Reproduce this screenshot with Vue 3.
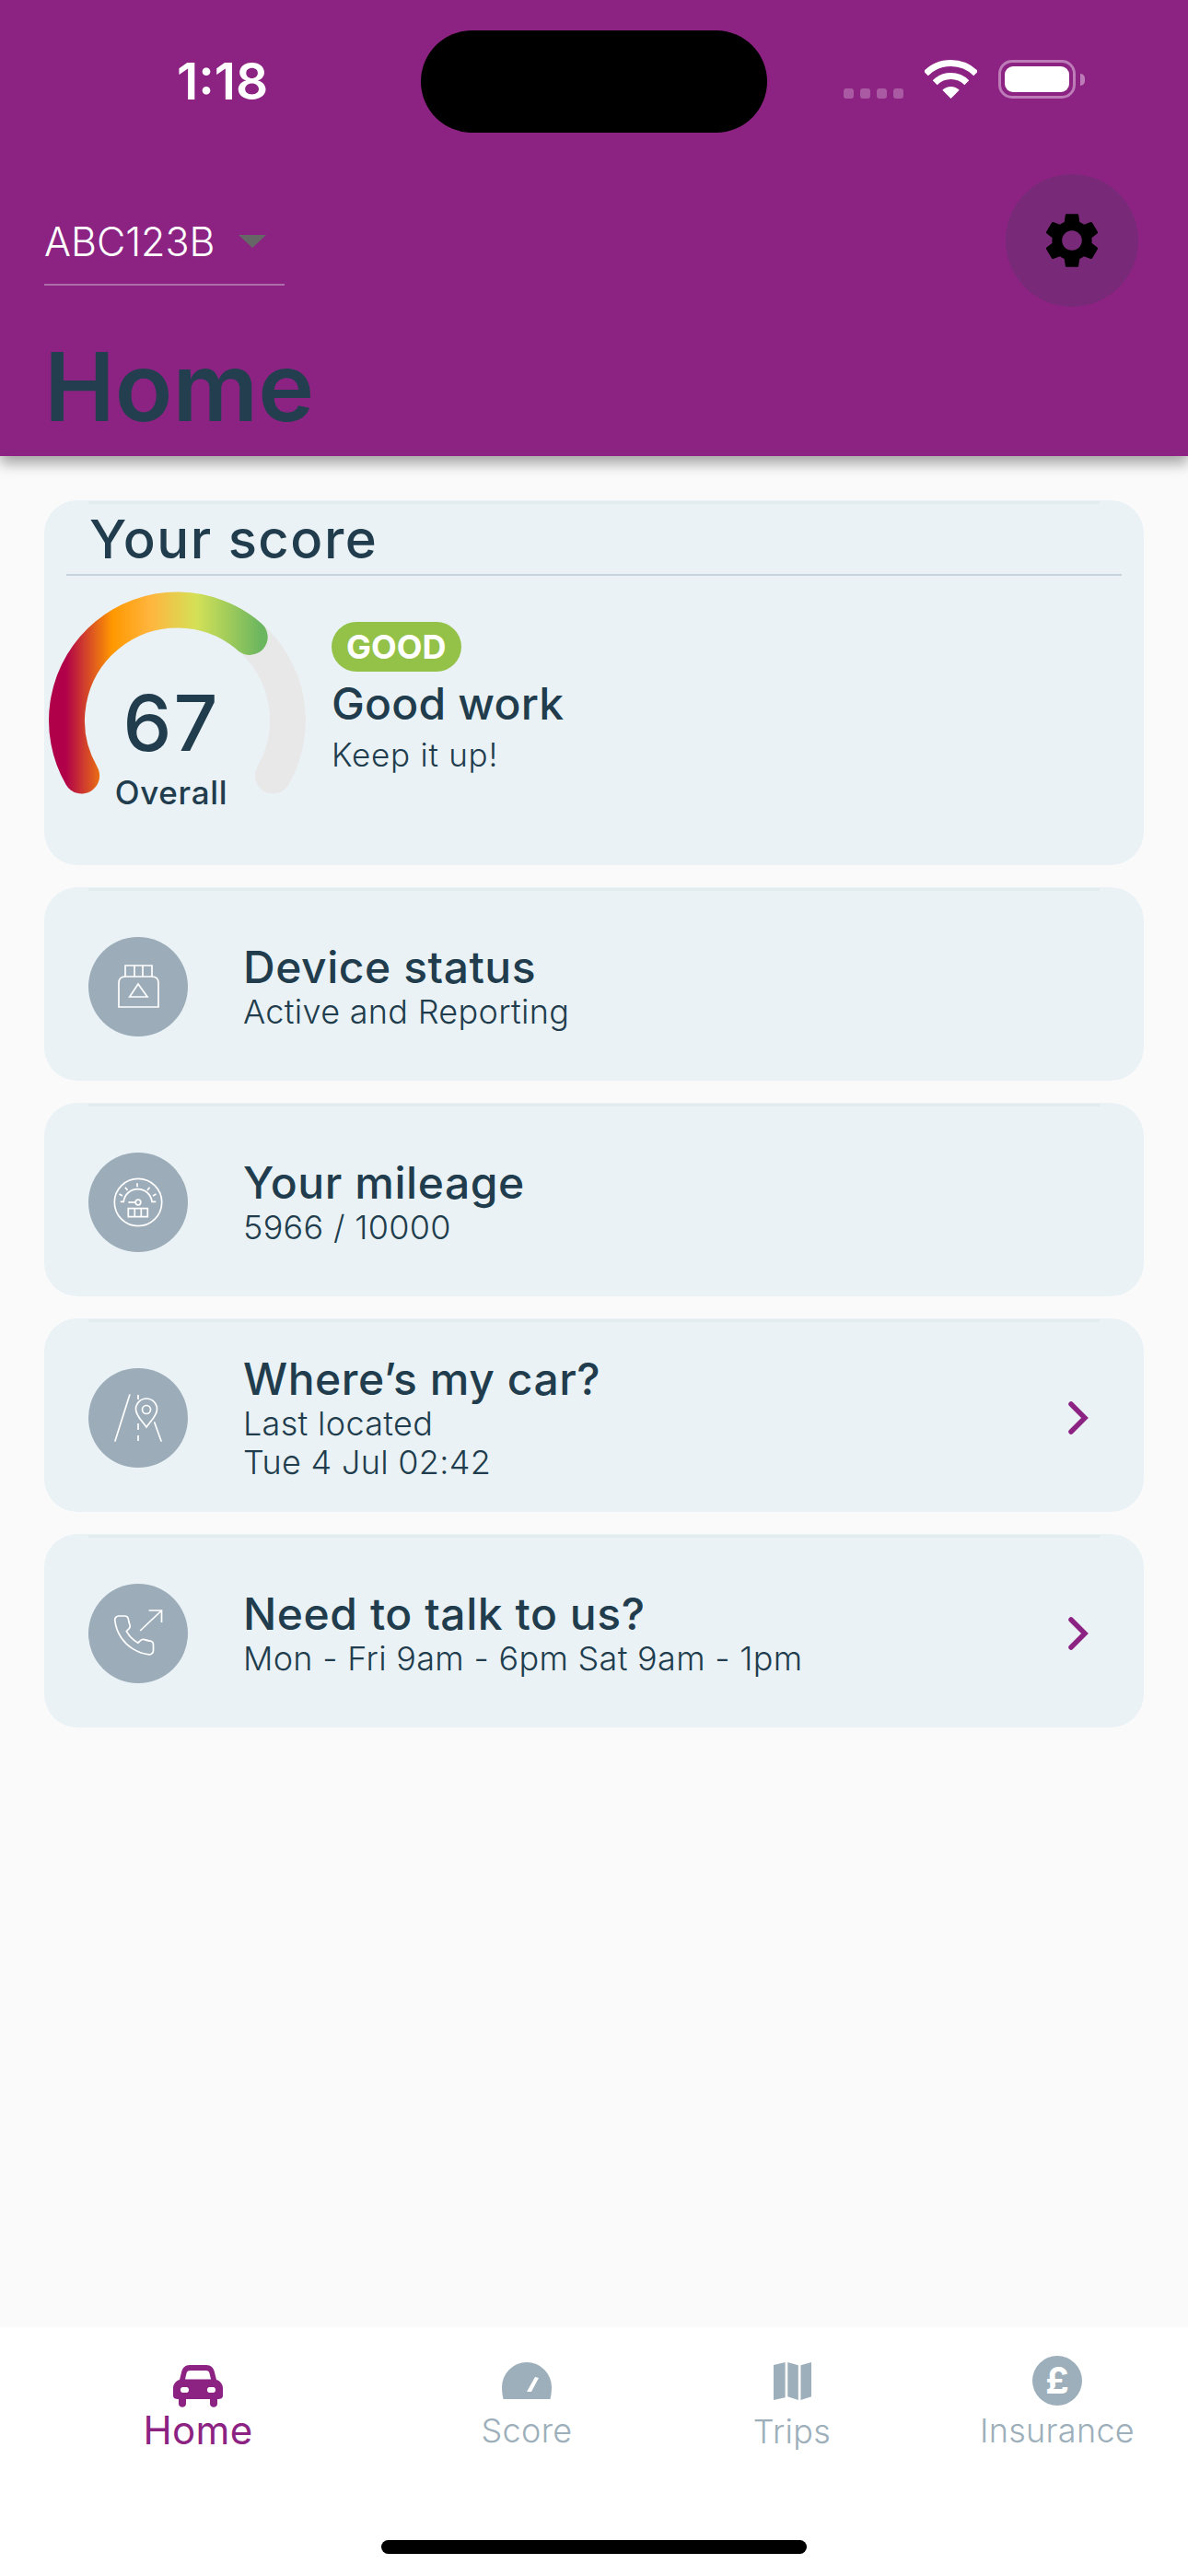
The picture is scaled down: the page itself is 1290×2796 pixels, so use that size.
<script setup>
const rows = [
  { key: 'device', title: 'Device status', lines: ['Active and Reporting'], link: false },
  { key: 'mileage', title: 'Your mileage', lines: ['5966 / 10000'], link: false },
  { key: 'car', title: 'Where’s my car?', lines: ['Last located', 'Tue 4 Jul 02:42'], link: true },
  { key: 'phone', title: 'Need to talk to us?', lines: ['Mon - Fri 9am - 6pm Sat 9am - 1pm'], link: true }
]
</script>

<template>
  <div class="page">
    <header class="top">
      <div class="status">
        <div class="time-slot"><span class="time">1:18</span></div>
        <div class="island"></div>
        <div class="status-right">
          <div class="signal"><i></i><i></i><i></i><i></i></div>
          <svg class="wifi" width="57" height="42" viewBox="0 0 57 42">
            <path d="M1.3 14.8A38.5 38.5 0 0 1 55.7 14.8" fill="none" stroke="#fff" stroke-width="7" />
            <path d="M11.2 24.7A24.5 24.5 0 0 1 45.8 24.7" fill="none" stroke="#fff" stroke-width="7" />
            <path d="M28.5 42L19.3 32.8A13 13 0 0 1 37.7 32.8Z" fill="#fff" />
          </svg>
          <div class="battery"><div class="battery-fill"></div></div>
          <div class="battery-cap"></div>
        </div>
      </div>

      <div class="top-row">
        <div class="select">
          <span class="select-text">ABC123B</span>
          <span class="select-arrow"></span>
        </div>
        <button class="gear">
          <svg width="72" height="72" viewBox="0 0 24 24">
            <path d="M19.14 12.94c.04-.3.06-.61.06-.94 0-.32-.02-.64-.07-.94l2.03-1.58c.18-.14.23-.41.12-.61l-1.92-3.32c-.12-.22-.37-.29-.59-.22l-2.39.96c-.5-.38-1.03-.7-1.62-.94l-.36-2.54c-.04-.24-.24-.41-.48-.41h-3.84c-.24 0-.43.17-.47.41l-.36 2.54c-.59.24-1.13.57-1.62.94l-2.39-.96c-.22-.08-.47 0-.59.22L2.74 8.87c-.12.21-.08.47.12.61l2.03 1.58c-.05.3-.09.63-.09.94s.02.64.07.94l-2.03 1.58c-.18.14-.23.41-.12.61l1.92 3.32c.12.22.37.29.59.22l2.39-.96c.5.38 1.03.7 1.62.94l.36 2.54c.05.24.24.41.48.41h3.84c.24 0 .44-.17.47-.41l.36-2.54c.59-.24 1.13-.56 1.62-.94l2.39.96c.22.08.47 0 .59-.22l1.92-3.32c.12-.22.07-.47-.12-.61l-2.01-1.58zM12 15.6c-1.98 0-3.6-1.62-3.6-3.6s1.62-3.6 3.6-3.6 3.6 1.62 3.6 3.6-1.62 3.6-3.6 3.6z" fill="#000" />
          </svg>
        </button>
      </div>

      <h1 class="page-title">Home</h1>
    </header>

    <main class="content">
      <section class="card score-card">
        <h2 class="score-title">Your score</h2>
        <div class="score-line"></div>
        <div class="score-body">
          <svg class="gauge" width="300" height="240" viewBox="0 0 300 240">
            <defs>
              <linearGradient id="scoreGrad" gradientUnits="userSpaceOnUse" x1="23" y1="0" x2="235" y2="0">
                <stop offset="0" stop-color="#b0004a" />
                <stop offset="0.24" stop-color="#ff9800" />
                <stop offset="0.44" stop-color="#ffb63f" />
                <stop offset="0.67" stop-color="#d4e157" />
                <stop offset="1" stop-color="#6cb65f" />
              </linearGradient>
            </defs>
            <path d="M40.6 202A120 120 0 1 1 248.4 202" fill="none" stroke="#e8e8e8" stroke-width="39" stroke-linecap="round" />
            <path d="M40.6 202A120 120 0 0 1 223.2 51.4" fill="none" stroke="url(#scoreGrad)" stroke-width="39" stroke-linecap="round" />
            <text class="gauge-num" x="138" y="175" text-anchor="middle">67</text>
            <text class="gauge-label" x="138" y="233" text-anchor="middle">Overall</text>
          </svg>
          <div class="score-text">
            <span class="pill">GOOD</span>
            <div class="score-head">Good work</div>
            <div class="score-sub">Keep it up!</div>
          </div>
        </div>
      </section>

      <section v-for="row in rows" :key="row.key" class="card row">
        <div class="row-icon">
          <svg width="108" height="108" viewBox="0 0 108 108" fill="none" stroke="#fff" stroke-width="1.7">
            <g v-if="row.key === 'device'">
              <path d="M33 76V50q0-7 7-7h29q7 0 7 7v26Z" />
              <path d="M40 43V31h29v12M50 31v12M59 31v12" />
              <path d="M44.7 65L54 51l10 14Z" />
            </g>
            <g v-else-if="row.key === 'mileage'">
              <circle cx="54" cy="54" r="25.7" />
              <path d="M34.7 53.3h3.5A15.5 15.5 0 0 1 69 53.3h4.3" />
              <path d="M53 37.3v-4M42.5 41l-2.5-3.2M64 41l2.5-3.2M37 47l-3.5-2M70 47l3.5-2" />
              <circle cx="54" cy="54" r="2.8" />
              <path d="M43.3 54h8" />
              <path d="M43.3 60.7H64.3V69.7H43.3ZM50.3 60.7V69.7M57.3 60.7V69.7" />
            </g>
            <g v-else-if="row.key === 'car'">
              <path d="M44.8 29L29 79M71.8 59L79 79" stroke-linecap="round" />
              <path d="M54 29v5M54 60v7M54 73v6" />
              <path d="M63 64C59 58 51.5 52 51.5 44.5A11.5 11.5 0 0 1 74.5 44.5C74.5 52 67 58 63 64Z" />
              <circle cx="63" cy="45" r="4.5" />
            </g>
            <g v-else>
              <path transform="translate(24.3 30.8) scale(2.1)" stroke-width="0.8" d="M22 16.92v3a2 2 0 0 1-2.18 2 19.79 19.79 0 0 1-8.63-3.07 19.5 19.5 0 0 1-6-6 19.79 19.79 0 0 1-3.07-8.67A2 2 0 0 1 4.11 2h3a2 2 0 0 1 2 1.72 12.84 12.84 0 0 0 .7 2.81 2 2 0 0 1-.45 2.11L8.09 9.91a16 16 0 0 0 6 6l1.27-1.27a2 2 0 0 1 2.11-.45 12.84 12.84 0 0 0 2.81.7A2 2 0 0 1 22 16.92z" />
              <path d="M56.2 51L79.5 29M65.6 29H79.5V42" />
            </g>
          </svg>
        </div>
        <div class="row-text">
          <div class="row-title">{{ row.title }}</div>
          <div v-for="line in row.lines" :key="line" class="row-sub">{{ line }}</div>
        </div>
        <svg v-if="row.link" class="chevron" width="22" height="36" viewBox="0 0 22 36">
          <path d="M3 3L18 18L3 33" fill="none" stroke="#8c2383" stroke-width="5.5" stroke-linecap="round" />
        </svg>
      </section>
    </main>

    <nav class="tabs">
      <div class="tab active">
        <svg class="tab-icon car-icon" width="54" height="46" viewBox="0 0 54 46">
          <path fill-rule="evenodd" fill="#8c2383" d="M18 0H36C41 0 44 3 45 8L47 16C51 17 54 21 54 25V33C54 36 52 37 48 37V42C48 47 40 47 40 42V37H14V42C14 47 6 47 6 42V37C2 37 0 36 0 33V25C0 21 3 17 7 16L9 8C10 3 13 0 18 0ZM18.5 6C16 6 15 7 14.5 9L13 15.5H41L39.5 9C39 7 38 6 35.5 6ZM10.5 24C7 24 7 30 10.5 30H14.5C18 30 18 24 14.5 24ZM39.5 24C36 24 36 30 39.5 30H43.5C47 30 47 24 43.5 24Z" />
        </svg>
        <span class="tab-label">Home</span>
      </div>
      <div class="tab">
        <svg class="tab-icon" width="54" height="40" viewBox="0 0 54 40">
          <path fill-rule="evenodd" fill="#9cafba" d="M1.5 40C.5 36 0 31 0 27A27 27 0 0 1 54 27C54 31 53.5 36 52.5 40ZM27 32H32L40 17L36 16Z" />
        </svg>
        <span class="tab-label">Score</span>
      </div>
      <div class="tab">
        <svg class="tab-icon" width="41" height="41" viewBox="0 0 41 41">
          <path fill="#9cafba" d="M0 3L12.6 0V38.3L0 41ZM15.3 0L26.8 3.3V41L15.3 37.3ZM29.5 3.3L41 0V37.3L29.5 41Z" />
        </svg>
        <span class="tab-label">Trips</span>
      </div>
      <div class="tab">
        <div class="pound">£</div>
        <span class="tab-label">Insurance</span>
      </div>
    </nav>
    <div class="home-bar"></div>
  </div>
</template>

<style>
html, body { margin: 0; background: #fafafa; }
</style>

<style scoped>
.page {
  width: 1290px;
  height: 2796px;
  position: relative;
  display: flex;
  flex-direction: column;
  background: #fafafa;
  font-family: Inter, "Noto Sans", sans-serif;
  color: #213d4d;
}
.top {
  height: 495px;
  flex: none;
  background: #8c2383;
  box-shadow: 0 8px 14px rgba(0, 0, 0, 0.35);
  position: relative;
  z-index: 1;
  box-sizing: border-box;
}
.status {
  height: 189px;
  display: flex;
  align-items: flex-start;
  padding-top: 33px;
  box-sizing: border-box;
}
.time-slot {
  width: 457px;
  padding-left: 192px;
  box-sizing: border-box;
}
.time {
  display: block;
  margin-top: 28px;
  font-size: 55px;
  line-height: 54px;
  font-weight: 600;
  color: #fff;
}
.island {
  width: 376px;
  height: 111px;
  border-radius: 56px;
  background: #000;
}
.status-right {
  display: flex;
  align-items: flex-start;
  padding-top: 32px;
  margin-left: 83px;
}
.signal {
  display: flex;
  gap: 7px;
  margin-top: 31px;
  margin-right: 23px;
}
.signal i {
  width: 11px;
  height: 11px;
  border-radius: 3px;
  background: rgba(255, 255, 255, 0.25);
}
.wifi { margin-right: 23px; }
.battery {
  width: 84px;
  height: 42px;
  box-sizing: border-box;
  border: 3px solid #bd7bb8;
  border-radius: 15px;
  padding: 4px;
}
.battery-fill {
  height: 100%;
  background: #fff;
  border-radius: 9px;
}
.battery-cap {
  width: 5px;
  height: 13px;
  margin: 15px 0 0 5px;
  background: #bd7bb8;
  border-radius: 0 6px 6px 0;
}
.top-row {
  display: flex;
  justify-content: space-between;
  align-items: flex-start;
  padding: 0 54px 0 48px;
}
.select {
  width: 261px;
  height: 121px;
  box-sizing: border-box;
  border-bottom: 2px solid #ae6dab;
  display: flex;
  align-items: flex-start;
  padding-top: 49px;
}
.select-text {
  font-size: 43px;
  line-height: 48px;
  font-weight: 300;
  color: #fff;
}
.select-arrow {
  width: 0;
  height: 0;
  margin: 17px 0 0 26px;
  border-left: 15px solid transparent;
  border-right: 15px solid transparent;
  border-top: 14px solid #666;
}
.gear {
  width: 144px;
  height: 144px;
  border: 0;
  padding: 0;
  border-radius: 50%;
  background: #782a78;
  display: flex;
  align-items: center;
  justify-content: center;
}
.page-title {
  margin: 0;
  padding-left: 48px;
  position: absolute;
  top: 360px;
  font-size: 103px;
  line-height: 120px;
  font-weight: 600;
  color: #233f4f;
}
.content {
  flex: 1;
  padding: 48px 48px 0;
  display: flex;
  flex-direction: column;
  gap: 24px;
}
.card {
  position: relative;
  background: #eaf2f6;
  border-radius: 36px;
}
.card::before {
  content: "";
  position: absolute;
  left: 48px;
  right: 48px;
  top: 1px;
  height: 3px;
  background: #e2ecef;
}
.score-card { height: 396px; }
.score-title {
  margin: 0;
  padding: 9px 0 0 49px;
  height: 71px;
  font-size: 58px;
  line-height: 66px;
  font-weight: 500;
  letter-spacing: 1.5px;
}
.score-line {
  height: 2px;
  margin: 0 24px;
  background: #c5d3dc;
}
.score-body {
  display: flex;
  padding-top: 15px;
}
.gauge { flex: none; }
.gauge-num {
  font-size: 84px;
  font-weight: 500;
  letter-spacing: 2px;
  fill: #213d4d;
}
.gauge-label {
  font-size: 35px;
  font-weight: 500;
  letter-spacing: 0.7px;
  fill: #213d4d;
}
.score-text {
  margin-left: 12px;
  padding-top: 35px;
}
.pill {
  display: inline-block;
  height: 54px;
  line-height: 54px;
  padding: 0 16px;
  border-radius: 27px;
  background: #94c249;
  color: #fff;
  font-size: 36px;
  font-weight: 700;
}
.score-head {
  margin-top: 6px;
  font-size: 48px;
  line-height: 58px;
  font-weight: 500;
  letter-spacing: 0.2px;
}
.score-sub {
  margin-top: 6px;
  font-size: 35px;
  line-height: 40px;
  font-weight: 300;
  letter-spacing: 0.75px;
}
.row {
  height: 210px;
  padding: 6px 60px 0 48px;
  box-sizing: border-box;
  display: flex;
  align-items: center;
}
.row-icon {
  width: 108px;
  height: 108px;
  flex: none;
  border-radius: 50%;
  background: #9cadb9;
}
.row-icon svg { display: block; }
.row-text {
  flex: 1;
  margin-left: 60px;
}
.row-title {
  font-size: 48px;
  line-height: 54px;
  font-weight: 500;
  letter-spacing: 0.55px;
}
.row-sub {
  font-size: 36px;
  line-height: 42px;
  font-weight: 300;
  letter-spacing: 0.3px;
}
.chevron { flex: none; }
.tabs {
  height: 270px;
  flex: none;
  background: #fff;
  display: grid;
  grid-template-columns: 430px 284px 292px 284px;
}
.tab {
  display: flex;
  flex-direction: column;
  align-items: center;
  padding-top: 38px;
  color: #9cafba;
  position: relative;
}
.tab-icon {
  display: block;
  margin-bottom: 12px;
}
.tab-label {
  font-size: 36px;
  line-height: 44px;
  font-weight: 300;
  letter-spacing: 0.3px;
}
.active { padding-top: 41px; color: #8c2383; }
.active .tab-icon { margin-bottom: 1px; }
.active .tab-label { font-size: 42px; line-height: 48px; font-weight: 400; }
.pound {
  width: 54px;
  height: 54px;
  margin-top: -7px;
  border-radius: 50%;
  background: #9cafba;
  color: #fff;
  font-size: 40px;
  line-height: 54px;
  font-weight: 700;
  text-align: center;
  margin-bottom: 5px;
}
.home-bar {
  position: absolute;
  left: 414px;
  top: 2757px;
  width: 462px;
  height: 15px;
  border-radius: 8px;
  background: #000;
}
</style>
